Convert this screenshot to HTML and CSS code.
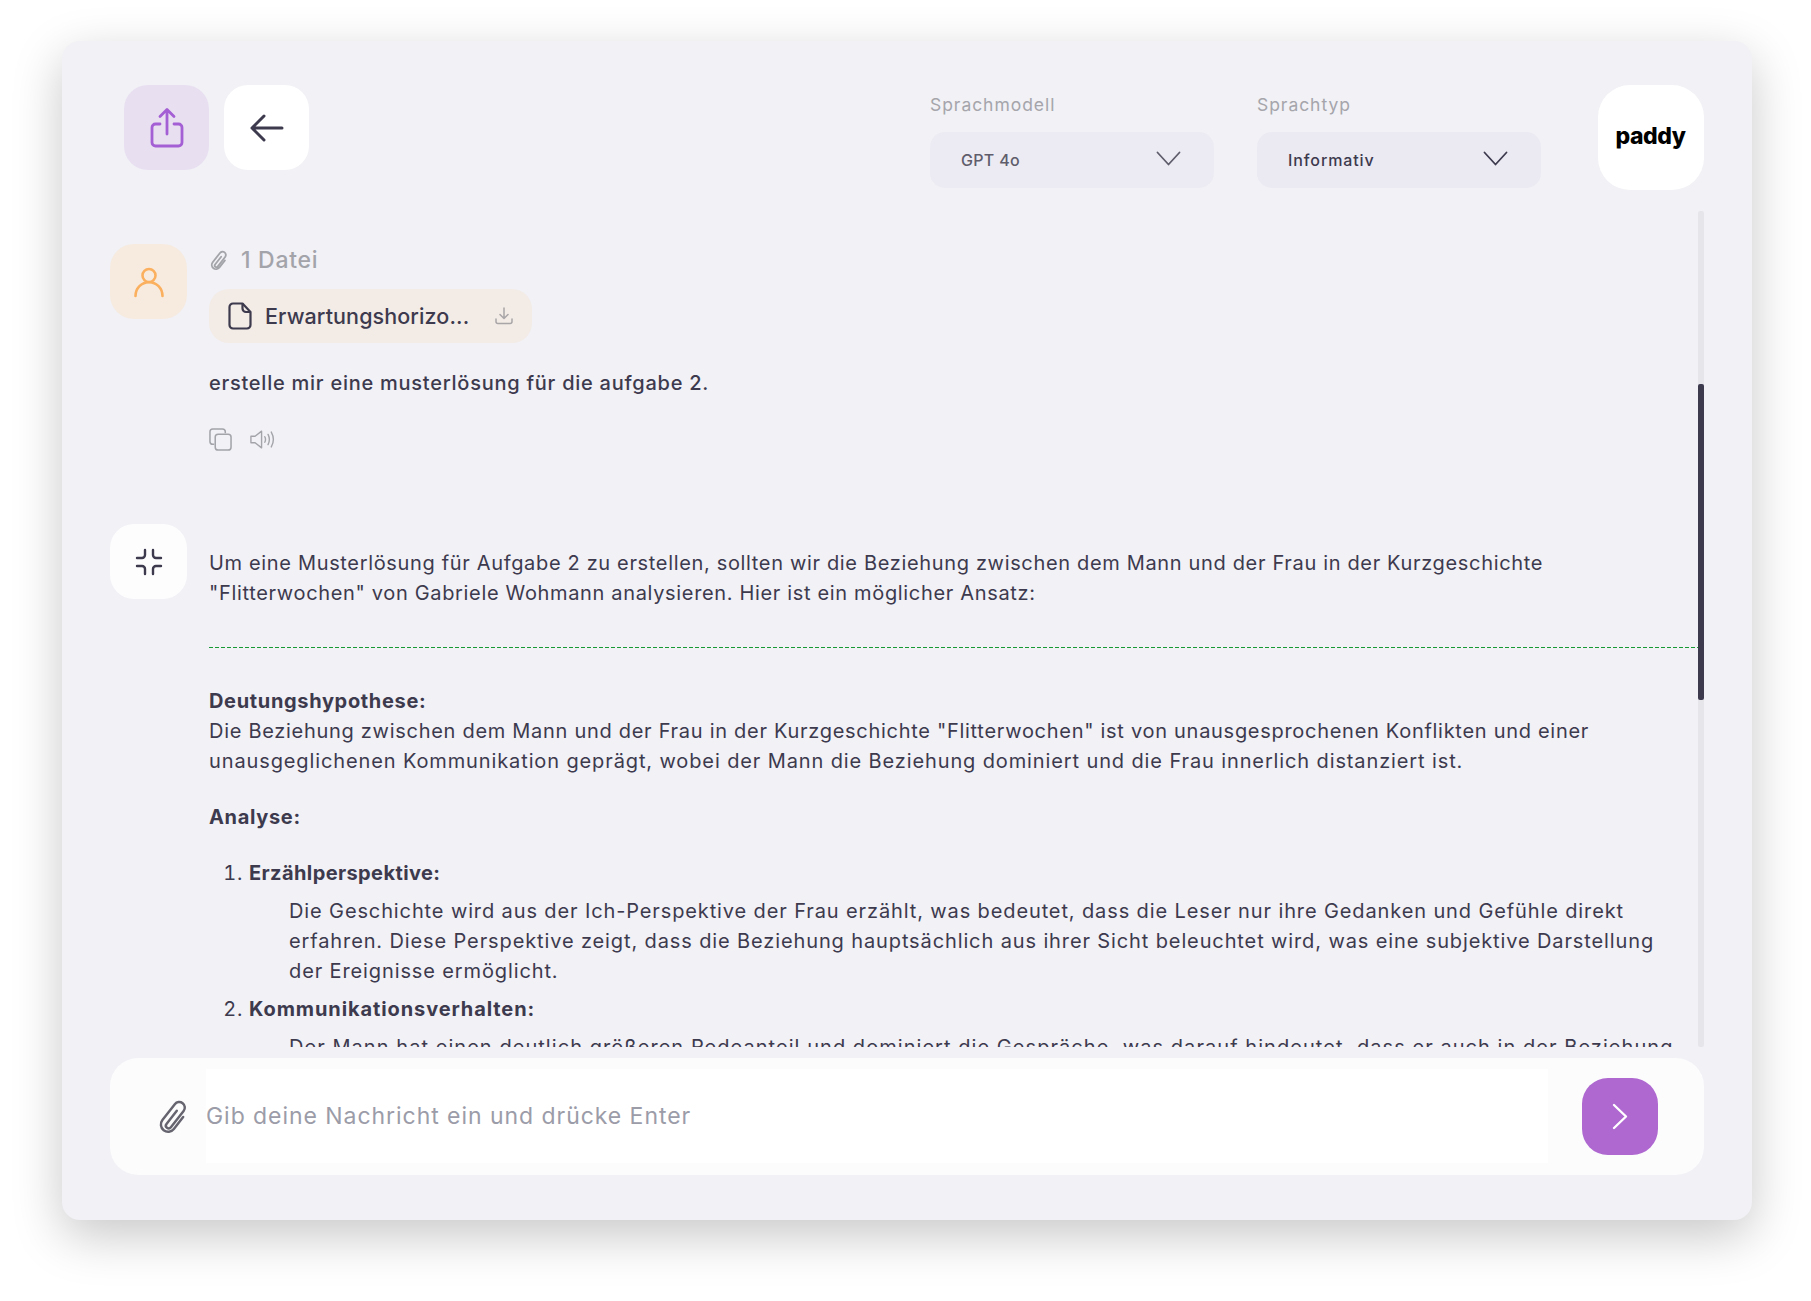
FILE: index.html
```html
<!DOCTYPE html>
<html lang="de">
<head>
<meta charset="utf-8">
<title>paddy</title>
<link rel="stylesheet" href="styles.css">
</head>
<body>
<main class="card">
  <header class="topbar">
    <div class="top-actions">
      <button class="tile tile-share" aria-label="Teilen">
        <svg width="36" height="42" viewBox="0 0 36 42" fill="none" stroke="#a45fd4" stroke-width="2.800" stroke-linecap="round" stroke-linejoin="round"><path d="M18 27V3M11 9.500 18 2.500l7 7"/><path d="M11 17H6.500a3.500 3.500 0 0 0-3.500 3.500v15A3.500 3.500 0 0 0 6.500 39h23a3.500 3.500 0 0 0 3.500-3.500v-15A3.500 3.500 0 0 0 29.500 17H25"/></svg>
      </button>
      <button class="tile tile-back" aria-label="Zurück">
        <svg width="34" height="28" viewBox="0 0 34 28" fill="none" stroke="#3d3a4e" stroke-width="3" stroke-linecap="round" stroke-linejoin="round"><path d="M32 14H2M14 2 2 14l12 12"/></svg>
      </button>
    </div>
    <div class="selects">
      <div class="field">
        <span class="field-label">Sprachmodell</span>
        <div class="select select-muted">
          <span>GPT 4o</span>
          <svg width="25" height="15" viewBox="0 0 25 15" fill="none" stroke="#5f5d6c" stroke-width="1.800" stroke-linecap="round" stroke-linejoin="round"><path d="M1.500 1.500 12.500 13.500 23.500 1.500"/></svg>
        </div>
      </div>
      <div class="field">
        <span class="field-label">Sprachtyp</span>
        <div class="select">
          <span>Informativ</span>
          <svg width="25" height="15" viewBox="0 0 25 15" fill="none" stroke="#3d3a4e" stroke-width="1.800" stroke-linecap="round" stroke-linejoin="round"><path d="M1.500 1.500 12.500 13.500 23.500 1.500"/></svg>
        </div>
      </div>
    </div>
    <div class="logo">paddy</div>
  </header>

  <section class="chat">
    <div class="messages">
      <article class="msg msg-user">
        <div class="avatar avatar-user">
          <svg width="32" height="32" viewBox="0 0 32 32" fill="none" stroke="#fbb05f" stroke-width="2.600" stroke-linecap="round"><circle cx="16" cy="9.500" r="6.500"/><path d="M2.500 30c0-8 6-13.800 13.500-13.800S29.500 22 29.500 30"/></svg>
        </div>
        <div class="msg-body">
          <div class="attach-count">
            <svg width="21" height="23" viewBox="0 0 32 34" fill="none" stroke="#a3a3aa" stroke-width="2.800" stroke-linecap="round" stroke-linejoin="round"><g transform="translate(16 17) rotate(38) translate(-8 -15)"><path d="M6.500 9V24a2.500 2.500 0 0 0 5 0V5.500a5 5 0 0 0-10 0V23.500a6.500 6.500 0 0 0 13 0V10"/></g></svg>
            <span>1 Datei</span>
          </div>
          <div class="file-chip">
            <svg width="24" height="28" viewBox="0 0 24 28" fill="none" stroke="#3d3a4e" stroke-width="2.200" stroke-linejoin="round"><path d="M5 1.500h9.500l8 8.500v13a3.500 3.500 0 0 1-3.500 3.500H5A3.500 3.500 0 0 1 1.500 23V5A3.500 3.500 0 0 1 5 1.500Z"/><path d="M14.500 1.500v5A3.500 3.500 0 0 0 18 10h4.500"/></svg>
            <span class="file-name">Erwartungshorizo...</span>
            <svg width="18" height="18" viewBox="0 0 18 18" fill="none" stroke="#a9a6a8" stroke-width="1.500" stroke-linecap="round" stroke-linejoin="round"><path d="M9 1v10M5 7.500 9 11.500l4-4M1 12v2.500A2 2 0 0 0 3 16.500h12a2 2 0 0 0 2-2V12"/></svg>
          </div>
          <p class="user-text">erstelle mir eine musterlösung für die aufgabe 2.</p>
          <div class="msg-tools">
            <svg width="23" height="23" viewBox="0 0 24 24" fill="none" stroke="#a3a3aa" stroke-width="1.600" stroke-linejoin="round"><path d="M5.500 17H4a3 3 0 0 1-3-3V4a3 3 0 0 1 3-3h10a3 3 0 0 1 3 3v1.500"/><rect x="6.500" y="6.500" width="16.500" height="16.500" rx="3"/></svg>
            <svg width="25" height="21" viewBox="0 0 27 22" fill="none" stroke="#a3a3aa" stroke-width="1.500" stroke-linecap="round" stroke-linejoin="round"><path d="M1 7.500v7h4.500L12.500 20V2L5.500 7.500Z"/><path d="M16 8c1 2 1 4 0 6M19.500 5.500c1.800 3.500 1.800 7.500 0 11M23 3c2.800 5 2.800 11 0 16"/></svg>
          </div>
        </div>
      </article>

      <article class="msg msg-bot">
        <div class="avatar avatar-bot">
          <svg width="28" height="28" viewBox="0 0 28 28" fill="none" stroke="#3d3a4e" stroke-width="2.400" stroke-linecap="round" stroke-linejoin="round"><path d="M10 2v5a3 3 0 0 1-3 3H2M18 2v5a3 3 0 0 0 3 3h5M10 26v-5a3 3 0 0 0-3-3H2M18 26v-5a3 3 0 0 1 3-3h5"/></svg>
        </div>
        <div class="msg-body answer">
          <p class="intro">Um eine Musterlösung für Aufgabe 2 zu erstellen, sollten wir die Beziehung zwischen dem Mann und der Frau in der Kurzgeschichte<br>"Flitterwochen" von Gabriele Wohmann analysieren. Hier ist ein möglicher Ansatz:</p>
          <div class="divider"></div>
          <p class="para"><strong>Deutungshypothese:</strong><br><span class="line-a">Die Beziehung zwischen dem Mann und der Frau in der Kurzgeschichte "Flitterwochen" ist von unausgesprochenen Konflikten und einer</span><br><span class="line-b">unausgeglichenen Kommunikation geprägt, wobei der Mann die Beziehung dominiert und die Frau innerlich distanziert ist.</span></p>
          <p class="para"><strong>Analyse:</strong></p>
          <ol class="points">
            <li>
              <strong>Erzählperspektive:</strong>
              <p class="point-text line-b">Die Geschichte wird aus der Ich-Perspektive der Frau erzählt, was bedeutet, dass die Leser nur ihre Gedanken und Gefühle direkt<br>erfahren. Diese Perspektive zeigt, dass die Beziehung hauptsächlich aus ihrer Sicht beleuchtet wird, was eine subjektive Darstellung<br>der Ereignisse ermöglicht.</p>
            </li>
            <li>
              <strong class="strong-wide">Kommunikationsverhalten:</strong>
              <p class="point-text line-c">Der Mann hat einen deutlich größeren Redeanteil und dominiert die Gespräche, was darauf hindeutet, dass er auch in der Beziehung</p>
            </li>
          </ol>
        </div>
      </article>
    </div>
    <div class="scroll-track"><div class="scroll-thumb"></div></div>
  </section>

  <footer class="composer">
    <svg class="composer-clip" width="36" height="38" viewBox="0 0 32 34" fill="none" stroke="#66656f" stroke-width="2.200" stroke-linecap="round" stroke-linejoin="round"><g transform="translate(16 17) rotate(38) translate(-8 -15)"><path d="M6.500 9V24a2.500 2.500 0 0 0 5 0V5.500a5 5 0 0 0-10 0V23.500a6.500 6.500 0 0 0 13 0V10"/></g></svg>
    <div class="composer-input">Gib deine Nachricht ein und drücke Enter</div>
    <button class="send" aria-label="Senden">
      <svg width="16" height="27" viewBox="0 0 16 27" fill="none" stroke="#fff" stroke-width="2.400" stroke-linecap="round" stroke-linejoin="round"><path d="M2 2 14 13.500 2 25"/></svg>
    </button>
  </footer>
</main>
</body>
</html>
```
FILE: styles.css
```css
* { box-sizing: border-box; }
html, body { margin: 0; height: 1301px; overflow: hidden; background: #fff; }
body {
  padding: 41px 59px 0 62px;
  font-family: Inter, "Open Sans", sans-serif;
  color: #3d3a4e;
}
button { border: 0; padding: 0; font: inherit; }
p { margin: 0; }

.card {
  width: 1690px;
  height: 1179px;
  background: #f1f1f6;
  border-radius: 18px;
  box-shadow: 0 16px 50px rgba(0, 0, 0, 0.22);
  display: flex;
  flex-direction: column;
  padding: 44px 48.500px 0 48px;
}

.topbar { display: flex; align-items: flex-start; height: 105px; flex: none; }
.top-actions { display: flex; gap: 15px; margin-left: 14px; }
.tile {
  width: 85px; height: 85px; border-radius: 24px;
  display: flex; align-items: center; justify-content: center;
}
.tile-share { background: #e8dff1; }
.tile-back { background: #fff; }

.selects { display: flex; gap: 43px; margin-left: auto; }
.field { width: 284px; display: flex; flex-direction: column; gap: 11px; }
.field-label { font-size: 17.500px; letter-spacing: 0.950px; line-height: 35px; color: #a5a5ab; height: 35px; margin-top: 2px; margin-bottom: -1px; }
.select {
  height: 56px; border-radius: 15px; background: #ebe9f2;
  display: flex; align-items: center; justify-content: space-between;
  padding: 0 33px 0 31px; font-size: 16px; font-weight: 500; letter-spacing: 0.900px;
}
.select-muted { color: #5f5d6c; background: #ecebf3; letter-spacing: 0.300px; }
.select svg { margin-top: -3px; }

.logo {
  width: 106px; height: 105px; border-radius: 32px; background: #fff; margin-left: 56.500px;
  display: flex; align-items: center; justify-content: center;
  font-size: 23px; font-weight: 800; color: #000; letter-spacing: -0.5px; padding-bottom: 4px;
}

.chat { display: flex; height: 836px; margin-top: 21px; flex: none; overflow: hidden; }
.messages { flex: 1; min-width: 0; padding-top: 33px; }
.msg { display: flex; gap: 22px; }
.avatar {
  width: 77px; height: 75px; border-radius: 24px; flex: none;
  display: flex; align-items: center; justify-content: center;
}
.avatar-user { background: #f7ebe0; }
.avatar-bot { background: #fdfdfe; }
.msg-body { flex: 1; min-width: 0; }
.msg-user { height: 280px; }

.attach-count {
  display: flex; align-items: center; gap: 11px;
  height: 32px; font-size: 23px; letter-spacing: 0.700px; color: #a3a3aa; font-weight: 500;
}
.file-chip {
  width: 323px; height: 54px; margin-top: 13px; border-radius: 20px; background: #f3ebe6;
  display: flex; align-items: center; padding: 0 19px 0 19px; gap: 13px;
}
.file-name { font-size: 21.500px; letter-spacing: 0.100px; font-weight: 450; flex: 1; white-space: nowrap; }
.user-text { margin-top: 25px; line-height: 30px; font-size: 20px; letter-spacing: 0.750px; font-weight: 450; }
.msg-tools { display: flex; align-items: center; gap: 18px; margin-top: 29px; height: 24px; }

.answer { padding-top: 24px; font-size: 20px; line-height: 30px; letter-spacing: 0.660px; }
.divider {
  height: 1px; margin: 39px 0 38px;
  background: repeating-linear-gradient(90deg, #179a33 0 4px, transparent 4px 6px);
}
.line-a { letter-spacing: 0.710px; }
.line-b { letter-spacing: 0.880px; }
.line-c { letter-spacing: 1.050px; }
.para { margin-bottom: 26px; }
.para strong, .points strong { font-weight: 700; }
.points strong { letter-spacing: 0.400px; }
.points .strong-wide { letter-spacing: 0.900px; }
.points { margin: 0; padding: 0 0 0 40px; }
.points li { margin-bottom: 8px; }
.point-text { margin: 8px 0 0 40px; }

.scroll-track { width: 5.500px; background: #e5e5ea; flex: none; position: relative; border-radius: 2px; }
.scroll-thumb { position: absolute; left: 0; right: 0; top: 173px; height: 316px; background: #3d3a4e; border-radius: 2px; }

.composer {
  height: 117px; margin-top: 11px; flex: none; border-radius: 28px; background: #fcfcfd;
  display: flex; align-items: center; padding: 0 45.500px 0 46px;
}
.composer-input {
  width: 1342px; height: 94px; margin: -1px 34px 0 14px; background: #fff;
  display: flex; align-items: center; font-size: 23px; font-weight: 400; color: #9b9ca8;
  letter-spacing: 0.950px;
}
.composer-clip { flex: none; }
.send {
  width: 76px; height: 77px; border-radius: 26px; background: #ae68d0; flex: none;
  display: flex; align-items: center; justify-content: center;
}
```
